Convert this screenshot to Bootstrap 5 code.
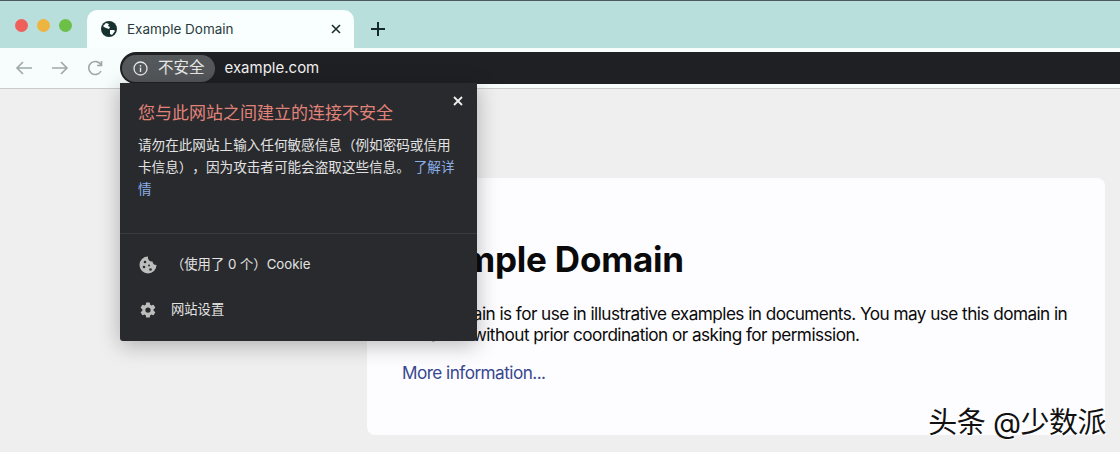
<!DOCTYPE html>
<html lang="zh">
<head>
<meta charset="utf-8">
<title>Example Domain</title>
<link href="https://cdn.jsdelivr.net/npm/bootstrap@5.3.0/dist/css/bootstrap.min.css" rel="stylesheet">
<style>
html,body{margin:0;height:452px;overflow:hidden}
body{font-family:Inter,"Noto Sans CJK SC",sans-serif;background:#efeff0;position:relative;text-spacing-trim:space-all}
.tabstrip{height:48px;background:#b9dfdd;border-top:1px solid #4c5a5c;padding-left:15px}
.dot{width:13px;height:13px;border-radius:50%}
.d-red{background:#f0605a}.d-yel{background:#eeb440}.d-grn{background:#6cc048}
.lights{gap:9px;margin-right:15px;padding-top:10px;height:38px}
.chrome-tab{width:267px;height:38px;margin-top:9px;background:#f8fffe;border-radius:10px 10px 0 0;padding:0 13px 0 14px;font-size:13.5px;color:#2a3a3c}
.tab-title{margin-left:10px}
.newtab{margin-left:17px;margin-top:9px;height:38px}
.toolbar{height:41px;background:#f6fdfc;border-bottom:1px solid #c8cccc;padding-left:15px}
.navicons{gap:18px;width:105px}
.omni{flex:1;height:32px;margin-top:4px;background:#1f2023;border-radius:16px 0 0 16px;padding-left:2px;color:#f1f1f1;font-size:15px}
.secure{height:27px;background:#55585b;border-radius:14px;padding:0 10px 0 11px;color:#e8e8e8;font-size:15.5px;gap:10px;margin-right:10px}
.popup{position:absolute;left:120px;top:83px;width:357px;height:258px;background:#292a2d;border-radius:0 0 3px 3px;box-shadow:0 4px 22px rgba(0,0,0,.28);color:#e0e0e0;z-index:5}
.pop-top{height:151px;padding:19px 18px 0 18px;border-bottom:1px solid #3b3c3f;position:relative}
.pop-title{font-size:17px;line-height:22px;color:#e2837a;margin:0 0 10px}
.pop-text{font-size:13.6px;line-height:22px;margin:0;color:#e2e2e2}
.pop-link{color:#8aaee8;text-decoration:none}
.pop-close{position:absolute;right:14px;top:13px;line-height:0}
.pop-row{padding:0 18px;font-size:13.3px;height:45px;color:#e2e2e2}
.pop-rows{padding-top:8px}
.pop-ico{width:20px;margin-right:13px;padding-left:1px;line-height:0}
.page-main{padding:89px 15px 0 367px}
.domain-card{height:257px;background:#fdfcfe;border-radius:8px;padding:57px 35px 0 35px;color:#0a0a0a}
.domain-card h1{font-family:Inter,sans-serif;font-size:35px;font-weight:700;line-height:48px;margin:0 0 21px;letter-spacing:-.2px}
.domain-card p{font-size:17.2px;line-height:20.5px;margin:0 0 18px;letter-spacing:-.55px}
.domain-card a{color:#38488f;text-decoration:none}
.watermark{position:absolute;right:14px;top:403px;font-size:29px;line-height:40px;color:#111;letter-spacing:-.5px;text-shadow:1px 1px 0 #fff,-1px -1px 0 #fff;z-index:6}
</style>
</head>
<body>
<div class="tabstrip d-flex align-items-start">
  <div class="lights d-flex align-items-center"><span class="dot d-red"></span><span class="dot d-yel"></span><span class="dot d-grn"></span></div>
  <div class="chrome-tab d-flex align-items-center">
    <svg width="16" height="16" viewBox="0 0 16 16"><circle cx="8" cy="8" r="8" fill="#17312f"/><path d="M2 5l3-3 3 1-1 2 2 1-1 2-3-1-2-1zM9 9l4 0 1 1-3 4-2-1z" fill="#f8fffe"/></svg>
    <span class="tab-title flex-grow-1">Example Domain</span>
    <svg width="10" height="10" viewBox="0 0 10 10"><path d="M1 1l8 8M9 1l-8 8" stroke="#1d2c2d" stroke-width="1.6"/></svg>
  </div>
  <div class="newtab d-flex align-items-center"><svg width="14" height="14" viewBox="0 0 14 14"><path d="M7 0v14M0 7h14" stroke="#17282a" stroke-width="2"/></svg></div>
</div>
<div class="toolbar d-flex align-items-start">
  <div class="navicons d-flex align-items-center pt-2 mt-1">
    <svg width="18" height="16" viewBox="0 0 18 16"><path d="M17 8H2M8 2L2 8l6 6" fill="none" stroke="#9fa8a8" stroke-width="1.6"/></svg>
    <svg width="18" height="16" viewBox="0 0 18 16"><path d="M1 8h15M10 2l6 6-6 6" fill="none" stroke="#9fa8a8" stroke-width="1.6"/></svg>
    <svg width="17" height="16" viewBox="0 0 17 16"><path d="M14 11a6.5 6.5 0 1 1 0-6M14.500 1v4.500H10" fill="none" stroke="#9fa8a8" stroke-width="1.6"/></svg>
  </div>
  <div class="omni d-flex align-items-center">
    <div class="secure d-flex align-items-center">
      <svg width="15" height="15" viewBox="0 0 15 15"><circle cx="7.500" cy="7.500" r="6.500" fill="none" stroke="#e6e6e6" stroke-width="1.3"/><path d="M7.500 6.500v4.500M7.500 4v1.500" stroke="#e6e6e6" stroke-width="1.400"/></svg>
      <span>不安全</span>
    </div>
    <span>example.com</span>
  </div>
</div>
<main class="page-main">
  <div class="domain-card">
    <h1>Example Domain</h1>
    <p>This domain is for use in illustrative examples in documents. You may use this domain in literature without prior coordination or asking for permission.</p>
    <p><a href="#">More information...</a></p>
  </div>
</main>
<div class="popup">
  <div class="pop-top">
    <span class="pop-close"><svg width="10" height="10" viewBox="0 0 10 10"><path d="M1 1l8 8M9 1l-8 8" stroke="#f0f0f0" stroke-width="1.800"/></svg></span>
    <h2 class="pop-title fw-normal">您与此网站之间建立的连接不安全</h2>
    <p class="pop-text">请勿在此网站上输入任何敏感信息（例如密码或信用卡信息），因为攻击者可能会盗取这些信息。 <a class="pop-link" href="#">了解详情</a></p>
  </div>
  <div class="pop-rows">
    <div class="pop-row d-flex align-items-center">
      <span class="pop-ico"><svg width="18" height="18" viewBox="0 0 18 18"><path d="M9 .5a8.500 8.500 0 1 0 8.500 8.500 4 4 0 0 1-4-3.500A4 4 0 0 1 9 .5z" fill="#bdbdbd"/><circle cx="6" cy="6" r="1.300" fill="#292a2d"/><circle cx="5" cy="11" r="1.300" fill="#292a2d"/><circle cx="10" cy="9.500" r="1" fill="#292a2d"/><circle cx="11.500" cy="13.500" r="1.300" fill="#292a2d"/></svg></span>
      <span>（使用了 0 个）Cookie</span>
    </div>
    <div class="pop-row d-flex align-items-center">
      <span class="pop-ico"><svg width="18" height="18" viewBox="0 0 24 24"><path fill="#bdbdbd" d="M19.400 13c.04-.3.06-.65.06-1s-.02-.7-.07-1l2.100-1.650a.5.500 0 0 0 .12-.64l-2-3.460a.5.500 0 0 0-.61-.22l-2.490 1a7.300 7.300 0 0 0-1.690-.98l-.38-2.650A.49.490 0 0 0 13.950 2h-4a.49.490 0 0 0-.49.420l-.38 2.650c-.61.250-1.170.590-1.690.980l-2.490-1a.49.490 0 0 0-.61.220l-2 3.460a.49.490 0 0 0 .12.640L4.510 11a8 8 0 0 0-.07 1c0 .33.020.680.070 1l-2.110 1.650a.5.500 0 0 0-.12.640l2 3.460c.12.220.39.300.61.220l2.490-1c.52.400 1.080.730 1.690.980l.38 2.650c.04.240.24.420.49.420h4c.25 0 .46-.18.490-.42l.38-2.650c.61-.25 1.170-.59 1.690-.98l2.490 1c.23.080.49 0 .61-.22l2-3.460a.5.500 0 0 0-.12-.64zM12 15.500a3.500 3.500 0 1 1 0-7 3.500 3.500 0 0 1 0 7z"/></svg></span>
      <span>网站设置</span>
    </div>
  </div>
</div>
<div class="watermark">头条 @少数派</div>
<script src="https://cdn.jsdelivr.net/npm/bootstrap@5.3.0/dist/js/bootstrap.bundle.min.js"></script>
</body>
</html>
